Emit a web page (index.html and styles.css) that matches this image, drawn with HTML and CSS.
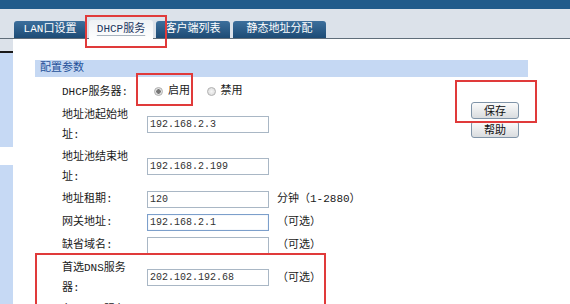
FILE: index.html
```html
<!DOCTYPE html>
<html lang="zh-CN">
<head>
    <meta charset="UTF-8">
    <title>DHCP服务</title>
    <link rel="stylesheet" href="styles.css">
</head>
<body>
    <div class="topbar"></div>
    <div class="tabbar">
        <div class="tab tab-lan">LAN口设置</div>
        <div class="tab tab-dhcp active"><span>DHCP服务</span></div>
        <div class="tab tab-client">客户端列表</div>
        <div class="tab tab-static">静态地址分配</div>
    </div>

    <div class="main">
        <div class="side">
            <div class="side-top"></div>
            <div class="side-block first"></div>
            <div class="side-gap"></div>
            <div class="side-block last"></div>
        </div>

        <div class="content">
            <div class="section-title">配置参数</div>
            <div class="section-body">
                <table class="form">
                    <tr>
                        <td class="label">DHCP服务器:</td>
                        <td colspan="2" class="radios">
                            <label><input type="radio" name="dhcp" checked> 启用</label>
                            <label><input type="radio" name="dhcp"> 禁用</label>
                        </td>
                    </tr>
                    <tr>
                        <td class="label">地址池起始地址:</td>
                        <td class="field"><input type="text" value="192.168.2.3"></td>
                        <td class="note"></td>
                    </tr>
                    <tr>
                        <td class="label">地址池结束地址:</td>
                        <td class="field"><input type="text" value="192.168.2.199"></td>
                        <td class="note"></td>
                    </tr>
                    <tr>
                        <td class="label">地址租期:</td>
                        <td class="field"><input type="text" value="120"></td>
                        <td class="note">分钟（1-2880）</td>
                    </tr>
                    <tr>
                        <td class="label">网关地址:</td>
                        <td class="field"><input type="text" class="focus" value="192.168.2.1"></td>
                        <td class="note">（可选）</td>
                    </tr>
                    <tr>
                        <td class="label">缺省域名:</td>
                        <td class="field"><input type="text" value=""></td>
                        <td class="note">（可选）</td>
                    </tr>
                    <tr>
                        <td class="label">首选DNS服务器:</td>
                        <td class="field"><input type="text" value="202.102.192.68"></td>
                        <td class="note">（可选）</td>
                    </tr>
                    <tr>
                        <td class="label">备用DNS服务器:</td>
                        <td class="field"><input type="text" value="0.0.0.0"></td>
                        <td class="note">（可选）</td>
                    </tr>
                </table>

                <div class="actions">
                    <button class="btn">保存</button>
                    <button class="btn">帮助</button>
                </div>
            </div>
        </div>
    </div>

    <!-- red highlight boxes drawn over the page -->
    <div class="mark mark-tab"></div>
    <div class="mark mark-radio"></div>
    <div class="mark mark-save"></div>
    <div class="mark mark-dns"></div>
</body>
</html>
```

FILE: styles.css
```css
body {
    margin: 0;
    width: 570px;
    height: 304px;
    overflow: hidden;
    position: relative;
    background: #fff;
    color: #1a1a1a;
    font-family: "Liberation Mono", "Noto Sans CJK SC", monospace;
    font-size: 11px;
}
.topbar {
    height: 9px;
    background: #215b8b;
}
.tabbar {
    height: 29px;
    background: #dce2ea;
    border-bottom: 1px solid #5f6d7a;
    display: flex;
    align-items: flex-end;
    padding-left: 14px;
}
.tab {
    height: 17px;
    line-height: 17px;
    text-align: center;
    color: #fff;
    background: linear-gradient(#3c6f9c, #1d4b75);
    border-radius: 3px 3px 0 0;
    margin-right: 3px;
}
.tab-lan { width: 72px; }
.tab-dhcp { width: 64px; }
.tab-client { width: 74px; }
.tab-static { width: 93px; }
.tab.active {
    height: 19px;
    line-height: 19px;
    margin-bottom: -1px;
    color: #1b3560;
    background: linear-gradient(#eef1f4, #fff);
}
.tab.active span {
    text-decoration: underline;
    text-decoration-color: #a9b4bf;
    text-underline-offset: 3px;
}
.main {
    display: flex;
    height: 265px;
}
.side {
    width: 13px;
    display: flex;
    flex-direction: column;
}
.side-top {
    height: 12px;
    background: #dce2ea;
    border-bottom: 2px solid #1a1a1a;
}
.side-block {
    background: #c6d9f4;
}
.side-block.first {
    height: 94px;
}
.side-gap {
    height: 18px;
}
.side-block.last {
    flex: 1;
}
.content {
    flex: 1;
    padding: 21px 0 0 22px;
}
.section-title {
    width: 488px;
    height: 17px;
    line-height: 17px;
    padding-left: 5px;
    background: #c5d8f3;
    color: #24519a;
}
.section-body {
    width: 493px;
    display: flex;
}
.form {
    margin: 3px 0 0 27px;
    border-collapse: collapse;
    border-spacing: 0;
}
.form td {
    height: 21px;
    padding: 1px 0;
    line-height: 20px;
    vertical-align: middle;
}
.form td.label {
    width: 70px;
    padding-right: 15px;
}
.form td.field {
    width: 128px;
}
.form td.note {
    padding-left: 2px;
    white-space: nowrap;
}
.form input[type="text"] {
    display: block;
    box-sizing: border-box;
    width: 122px;
    height: 17px;
    margin: 2px 0;
    padding: 0 2px;
    border: 1px solid #a9b7c5;
    font-family: "Liberation Mono", monospace;
    font-size: 10px;
    color: #333;
    background: #fff;
}
.form input.focus {
    border-color: #7c9fcb;
    box-shadow: inset 0 0 1px #9bb8dc;
}
.radios {
    padding-left: 7px !important;
}
.radios label {
    display: inline-flex;
    align-items: center;
    margin-right: 10px;
}
.radios input {
    appearance: none;
    width: 9px;
    height: 9px;
    margin: 0 5px 0 0;
    border: 1px solid #b3b3b3;
    border-radius: 50%;
    background: radial-gradient(#f6f6f6, #d6d6d6);
}
.radios input:checked {
    background: radial-gradient(circle, #777 0 2px, #e6e6e6 2.5px, #d2d2d2);
}
.actions {
    margin-left: auto;
    margin-right: 9px;
    padding-top: 25px;
    display: flex;
    flex-direction: column;
    gap: 2px;
}
.btn {
    width: 48px;
    height: 17px;
    padding: 0;
    font-family: "Noto Sans CJK SC", sans-serif;
    font-size: 11px;
    line-height: 15px;
    color: #111;
    background: linear-gradient(#fbfbfb, #d9dcdf);
    border: 1px solid #8094a8;
    border-radius: 3px;
}
.mark {
    position: absolute;
    box-sizing: border-box;
    border: 2px solid #e03a3a;
    z-index: 2;
}
.mark-tab {
    left: 85px;
    top: 15px;
    width: 82px;
    height: 33px;
}
.mark-radio {
    left: 136px;
    top: 73px;
    width: 57px;
    height: 33px;
}
.mark-save {
    left: 455px;
    top: 80px;
    width: 82px;
    height: 43px;
}
.mark-dns {
    left: 35px;
    top: 253px;
    width: 291px;
    height: 70px;
}
```
